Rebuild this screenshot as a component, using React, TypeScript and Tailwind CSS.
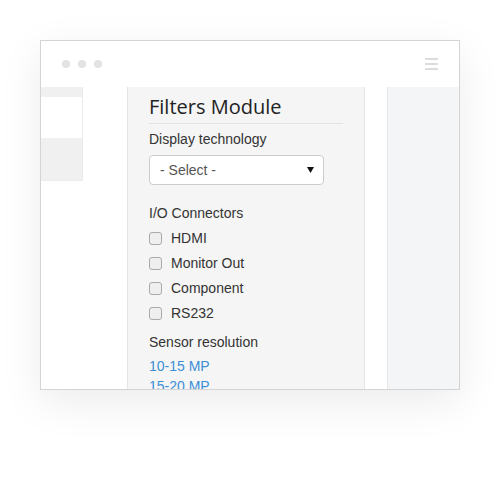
import React from 'react';

const connectors = ['HDMI', 'Monitor Out', 'Component', 'RS232'];
const resolutions = ['10-15 MP', '15-20 MP'];

const App: React.FC = () => {
  return (
    <div className="w-[500px] h-[500px] bg-white pt-[40px] pl-[40px] font-['Liberation_Sans',Arial,sans-serif]">
      <div className="w-[420px] h-[350px] border border-[#d4d4d4] bg-white flex flex-col shadow-[0_12px_40px_rgba(0,0,0,0.08)]">
        {/* window header */}
        <div className="h-[46px] flex items-center justify-between pl-[21px] pr-[21px] shrink-0">
          <div className="flex gap-[8px]">
            <span className="w-[8px] h-[8px] rounded-full bg-[#e2e2e2]" />
            <span className="w-[8px] h-[8px] rounded-full bg-[#e2e2e2]" />
            <span className="w-[8px] h-[8px] rounded-full bg-[#e2e2e2]" />
          </div>
          <div className="flex flex-col gap-[3px] w-[13px]">
            <span className="h-[2px] bg-[#dcdcdc]" />
            <span className="h-[2px] bg-[#dcdcdc]" />
            <span className="h-[2px] bg-[#dcdcdc]" />
          </div>
        </div>

        {/* body */}
        <div className="flex-1 flex overflow-hidden">
          <div className="w-[42px] shrink-0">
            <div className="border-r border-b border-[#ececec]">
              <div className="h-[10px] bg-[#f0f0f0]" />
              <div className="h-[41px] bg-white" />
              <div className="h-[42px] bg-[#f0f0f0]" />
            </div>
          </div>

          <div className="w-[44px] shrink-0" />

          {/* filters panel */}
          <div className="w-[238px] shrink-0 bg-[#f5f5f5] border-l border-r border-[#e4e4e4] pl-[21px] pr-[21px] pt-[8px] text-[14px] text-[#333]">
            <h2 className="text-[20px] leading-[24px] text-[#222] font-['Open_Sans',sans-serif]">Filters Module</h2>
            <div className="mt-[4px] h-px bg-[#e3e3e3]" />
            <p className="mt-[5px] leading-[20px]">Display technology</p>
            <div className="mt-[6px] w-[175px] h-[30px] bg-white border border-[#cccccc] rounded-[4px] flex items-center justify-between pl-[10px] pr-[9px]">
              <span className="text-[#555]">- Select -</span>
              <svg width="7" height="6" viewBox="0 0 7 6">
                <path d="M0 0 H7 L3.5 6 Z" fill="#111" />
              </svg>
            </div>
            <p className="mt-[18px] leading-[20px]">I/O Connectors</p>
            <div className="mt-[3px]">
              {connectors.map((c) => (
                <label key={c} className="h-[25px] flex items-center">
                  <span className="w-[13px] h-[13px] rounded-[3px] border border-[#a9a9a9] bg-[#efefef] shrink-0" />
                  <span className="ml-[9px]">{c}</span>
                </label>
              ))}
            </div>
            <p className="mt-[6px] leading-[20px]">Sensor resolution</p>
            <div className="mt-[4px]">
              {resolutions.map((r) => (
                <a key={r} className="block leading-[20px] text-[#3b8fd6]">{r}</a>
              ))}
            </div>
          </div>

          <div className="w-[22px] shrink-0" />

          <div className="flex-1 bg-[#f4f5f7] border-l border-[#e6e7e9]" />
        </div>
      </div>
    </div>
  );
};

export default App;
